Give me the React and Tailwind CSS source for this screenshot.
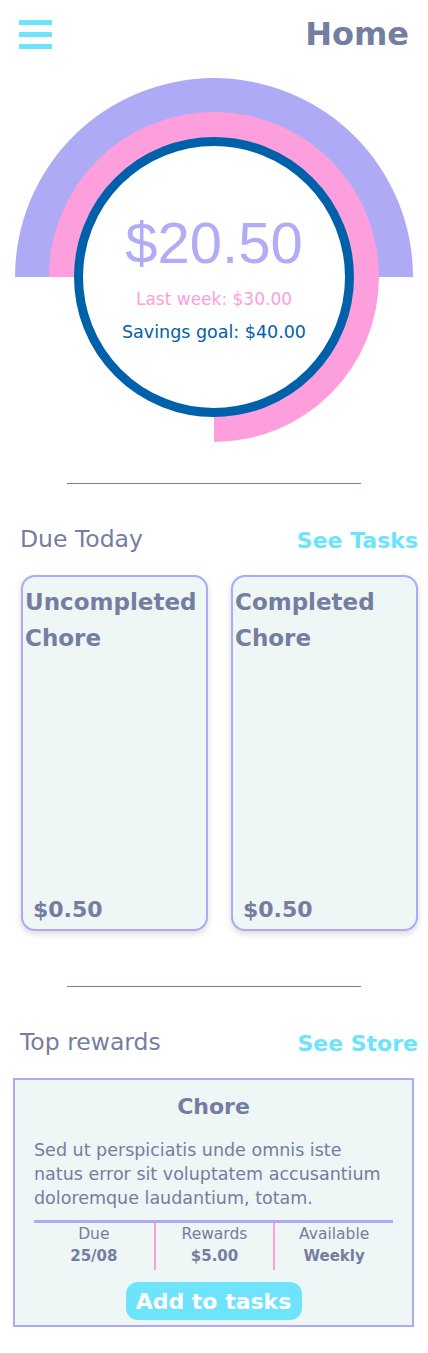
import React from "react";

const gray = "text-[#747ea0]";

const Gauge = () => (
  <div className="relative h-[380px] w-full">
    <svg className="absolute inset-0" width="428" height="380" viewBox="0 0 428 380">
      <path d="M 15 207 A 199 199 0 0 1 413 207 Z" fill="#aeaaf5" />
      <path d="M 49 207 A 165 165 0 1 1 214 372 L 214 344 A 137 137 0 1 0 77 207 Z" fill="#fc9fdc" />
      <circle cx="214" cy="207" r="135.5" fill="#ffffff" stroke="#0061ab" strokeWidth="9" />
    </svg>
    <div className="absolute inset-x-0 top-[141px] flex flex-col items-center">
      <p className="text-[58px] leading-[64px] text-[#b0acf6]" style={{ fontFamily: '"Liberation Sans", Arial, sans-serif' }}>
        $20.50
      </p>
      <p className="mt-[12px] text-[17px] leading-[24px] text-[#fca0dc]">Last week: $30.00</p>
      <p className="mt-[9px] text-[17.5px] leading-[24px] text-[#0061ab]">Savings goal: $40.00</p>
    </div>
  </div>
);

const SectionHead = ({ title, link }) => (
  <div className="flex h-[30px] items-center justify-between pl-[20px] pr-[10px]">
    <span className={`text-[23.5px] ${gray}`}>{title}</span>
    <span className="text-[22px] font-bold text-[#6de3fc]">{link}</span>
  </div>
);

const ChoreCard = ({ title }) => (
  <div className="flex h-[356px] w-[187px] flex-col justify-between rounded-[14px] border-2 border-[#aeaaf5] bg-[#eef6f6] shadow-[0_3px_6px_rgba(0,0,0,0.15)]">
    <p className={`pl-[2px] pt-[7px] text-[23px] font-bold leading-[36px] ${gray}`}>
      {title}
      <br />
      Chore
    </p>
    <p className={`pb-[4px] pl-[10px] text-[22px] font-bold leading-[30px] ${gray}`}>$0.50</p>
  </div>
);

export default function App() {
  return (
    <div className="w-[428px] bg-white" style={{ fontFamily: '"DejaVu Sans", "Noto Sans", sans-serif' }}>
      {/* header */}
      <div className="flex h-[70px] items-start justify-between px-[19px] pt-[20px]">
        <div className="flex flex-col gap-[7px]">
          <div className="h-[5px] w-[33px] bg-[#6de3fc]" />
          <div className="h-[5px] w-[33px] bg-[#6de3fc]" />
          <div className="h-[5px] w-[33px] bg-[#6de3fc]" />
        </div>
        <h1 className={`-mt-[4px] text-[32px] font-bold leading-[36px] ${gray}`}>Home</h1>
      </div>

      <Gauge />

      <div className="mx-auto mt-[33px] h-px w-[294px] bg-[#747ea0]" />

      <div className="mt-[41px]">
        <SectionHead title="Due Today" link="See Tasks" />
      </div>

      <div className="mt-[20px] flex gap-[23px] pl-[21px] pr-[10px]">
        <ChoreCard title="Uncompleted" />
        <ChoreCard title="Completed" />
      </div>

      <div className="mx-auto mt-[55px] h-px w-[294px] bg-[#747ea0]" />

      <div className="mt-[41px]">
        <SectionHead title="Top rewards" link="See Store" />
      </div>

      <div className="ml-[13px] mt-[20px] w-[401px] border-2 border-[#aeaaf5] bg-[#eef6f6] pb-[5px]">
        <p className={`pt-[12px] text-center text-[22px] font-bold leading-[30px] ${gray}`}>Chore</p>
        <p className={`mt-[16px] px-[19px] text-[17.5px] leading-[24px] ${gray}`}>
          Sed ut perspiciatis unde omnis iste
          <br />
          natus error sit voluptatem accusantium
          <br />
          doloremque laudantium, totam.
        </p>
        <div className="mx-[19px] mt-[10px] h-[3px] bg-[#aeaaf5]" />
        <div className="mx-[19px] grid grid-cols-3">
          {[
            ["Due", "25/08"],
            ["Rewards", "$5.00"],
            ["Available", "Weekly"],
          ].map(([label, value], i) => (
            <div
              key={label}
              className={`flex h-[47px] flex-col items-center ${i > 0 ? "border-l-2 border-[#fc9fdc]" : ""}`}
            >
              <span className={`text-[15.5px] leading-[22px] ${gray}`}>{label}</span>
              <span className={`text-[15px] font-bold leading-[22px] ${gray}`}>{value}</span>
            </div>
          ))}
        </div>
        <div className="mt-[12px] flex justify-center">
          <button className="flex h-[38px] w-[176px] items-center justify-center rounded-[12px] bg-[#6de3fc] text-[22px] font-bold text-white">
            Add to tasks
          </button>
        </div>
      </div>
      <div className="h-[23px]" />
    </div>
  );
}
